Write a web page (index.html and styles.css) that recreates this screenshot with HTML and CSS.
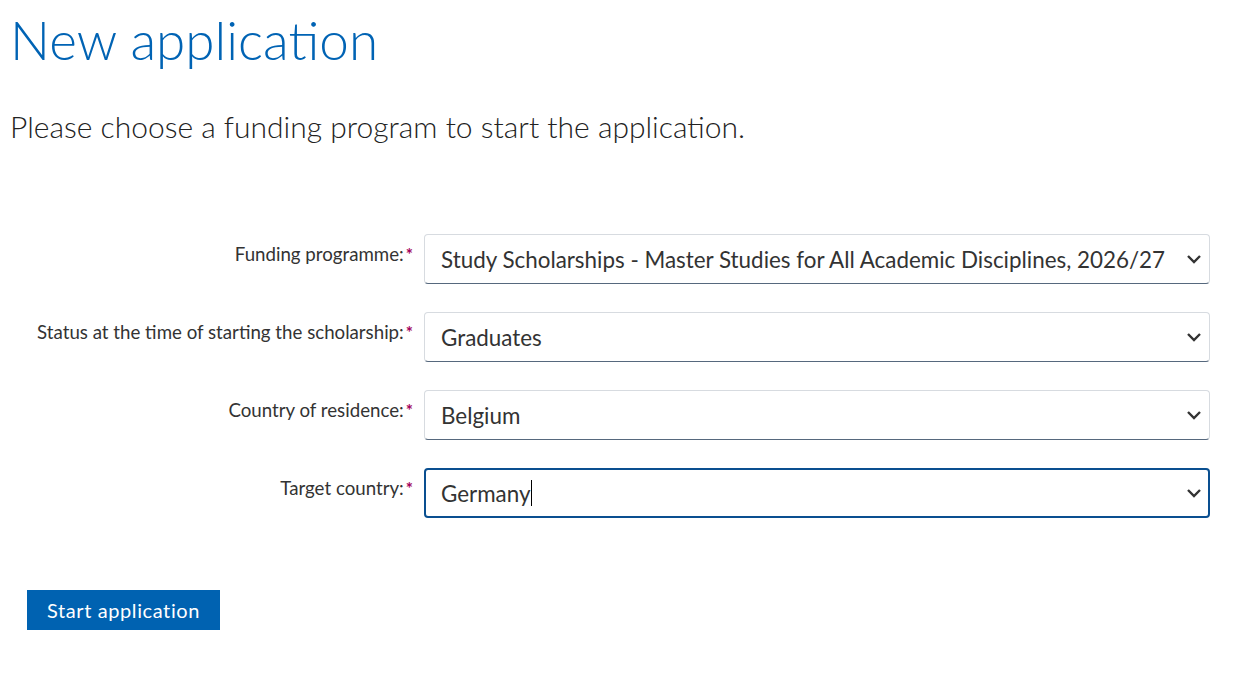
FILE: index.html
```html
<!DOCTYPE html>
<html lang="en">
<head>
    <meta charset="UTF-8">
    <title>New application</title>
    <link rel="stylesheet" href="styles.css">
</head>
<body>

<div class="page">
    <h1>New application</h1>
    <p class="intro">Please choose a funding program to start the application.</p>

    <!-- Application form -->
    <form class="app-form">
        <div class="form-row">
            <label>Funding programme:<span class="req">*</span></label>
            <div class="select">
                <span class="value">Study Scholarships - Master Studies for All Academic Disciplines, 2026/27</span>
                <svg class="chevron" viewBox="0 0 16 16"><path d="M2 5 L8 11 L14 5" /></svg>
            </div>
        </div>
        <div class="form-row">
            <label>Status at the time of starting the scholarship:<span class="req">*</span></label>
            <div class="select">
                <span class="value">Graduates</span>
                <svg class="chevron" viewBox="0 0 16 16"><path d="M2 5 L8 11 L14 5" /></svg>
            </div>
        </div>
        <div class="form-row">
            <label>Country of residence:<span class="req">*</span></label>
            <div class="select">
                <span class="value">Belgium</span>
                <svg class="chevron" viewBox="0 0 16 16"><path d="M2 5 L8 11 L14 5" /></svg>
            </div>
        </div>
        <div class="form-row">
            <label>Target country:<span class="req">*</span></label>
            <div class="select focused">
                <span class="value">Germany</span><span class="caret"></span>
                <svg class="chevron" viewBox="0 0 16 16"><path d="M2 5 L8 11 L14 5" /></svg>
            </div>
        </div>

        <div class="actions">
            <button type="button" class="btn-primary">Start application</button>
        </div>
    </form>
</div>

</body>
</html>
```

FILE: styles.css
```css
/* Reset */
* {
    margin: 0;
    padding: 0;
    box-sizing: border-box;
}

body {
    font-family: Lato, "Open Sans", Arial, sans-serif;
    background-color: #fff;
    color: #333;
}

.page {
    padding: 8px 10px 0 10px;
}

h1 {
    font-weight: 300;
    font-size: 53px;
    line-height: 64px;
    color: #0063b4;
}

.intro {
    margin-top: 34px;
    font-size: 30px;
    font-weight: 300;
    line-height: 40px;
    color: #222;
}

/* Form rows */
.app-form {
    margin-top: 88px;
}

.form-row {
    display: flex;
    align-items: flex-start;
    margin-bottom: 28px;
}

.form-row label {
    width: 414px;
    text-align: right;
    padding-right: 11px;
    padding-top: 9px;
    font-size: 18.7px;
    line-height: 22px;
    color: #333;
}

.req {
    color: #a3005c;
    font-size: 17px;
    font-weight: 700;
    margin-left: 2px;
}

.select {
    position: relative;
    width: 786px;
    height: 50px;
    display: flex;
    align-items: center;
    padding: 0 50px 0 16px;
    border: 1px solid #d7dbe0;
    border-bottom-color: #56687d;
    border-radius: 4px;
    font-size: 22.4px;
    color: #333;
    white-space: nowrap;
}

.select.focused {
    border: 2px solid #0a4f90;
    padding-left: 15px;
}

.caret {
    display: inline-block;
    width: 1px;
    height: 26px;
    background-color: #000;
}

.chevron {
    position: absolute;
    right: 7px;
    top: 16px;
    width: 16px;
    height: 16px;
    fill: none;
    stroke: #333;
    stroke-width: 2.4;
}

.select.focused .chevron {
    right: 6px;
    top: 15px;
}

/* Button */
.actions {
    padding-top: 44px;
    padding-left: 17px;
}

.btn-primary {
    background-color: #0062b1;
    color: #fff;
    border: none;
    font-family: inherit;
    font-size: 20px;
    letter-spacing: 0.6px;
    height: 40px;
    padding: 0 20px;
}
```
